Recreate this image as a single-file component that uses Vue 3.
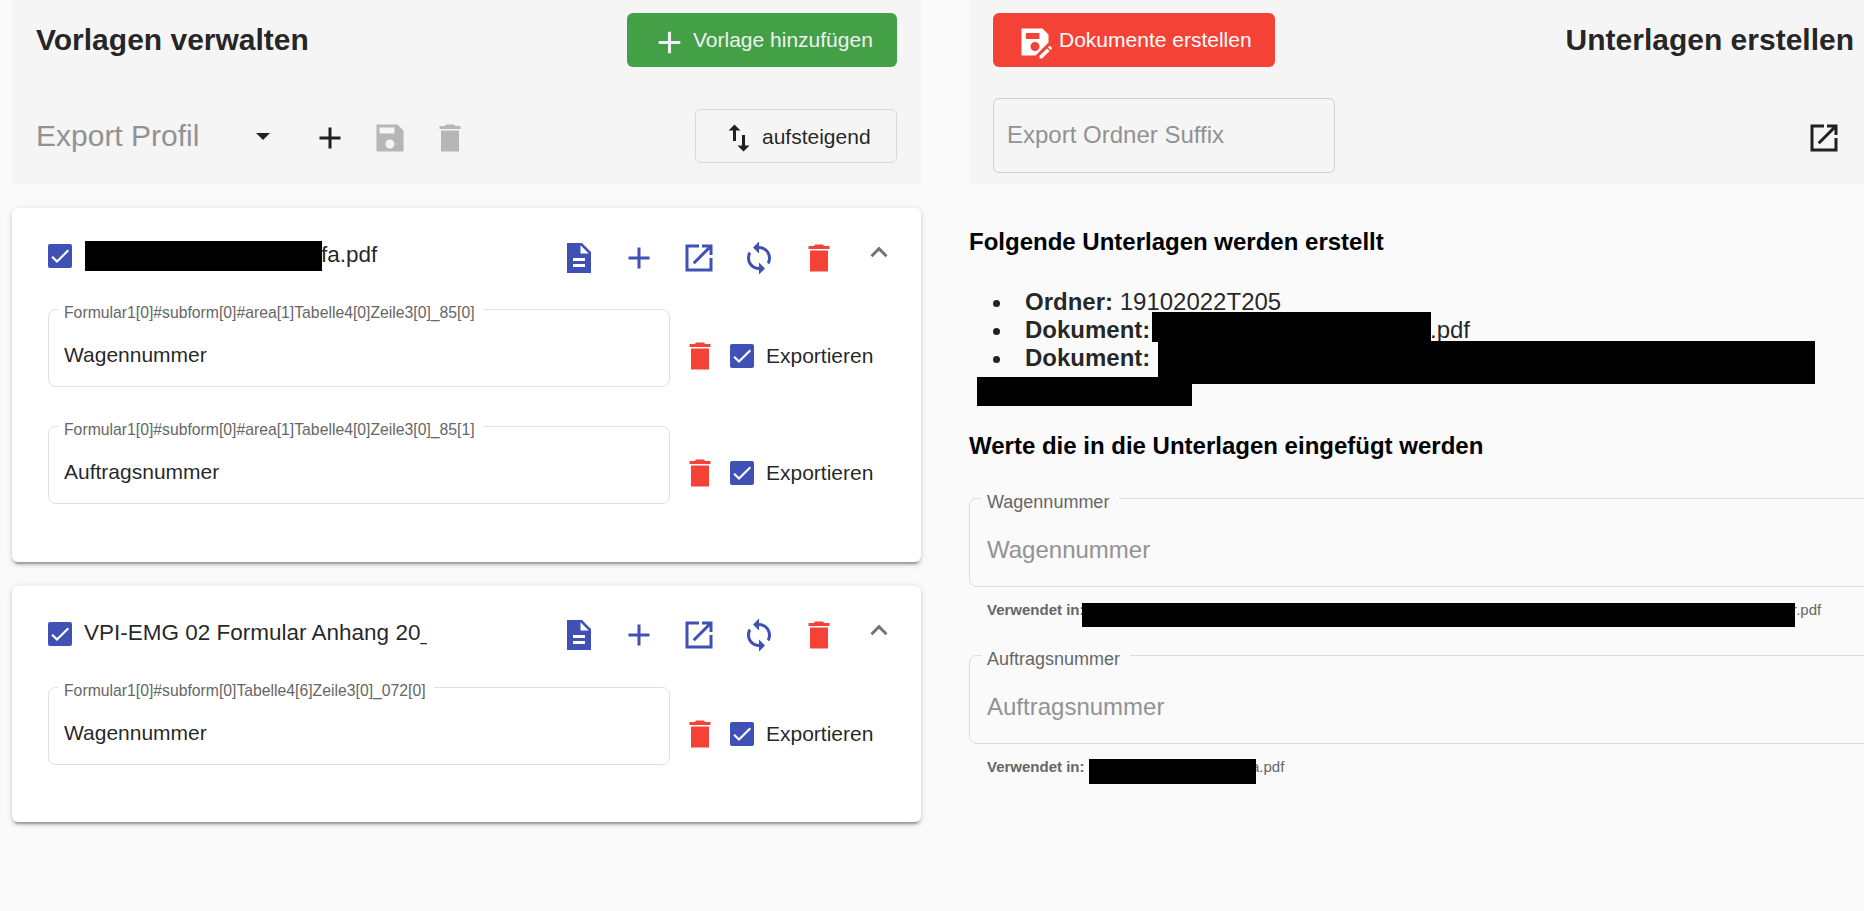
<script setup>
import { h } from 'vue'

const paths = {
  add: 'M19 13h-6v6h-2v-6H5v-2h6V5h2v6h6v2z',
  save: 'M17 3H3v18h18V7l-4-4zm-5 16c-1.66 0-3-1.34-3-3s1.34-3 3-3 3 1.34 3 3-1.34 3-3 3zm3-10H5V5h10v4z',
  saveAs: 'M21 12.4V7l-4-4H3v18h9.4l8.6-8.6zM15 15c0 1.66-1.34 3-3 3s-3-1.34-3-3 1.34-3 3-3 3 1.34 3 3zM6 6h9v4H6V6zm13.99 10.25 1.77 1.77L16.77 23H15v-1.77l4.99-4.98zm3.26.26-.85.85-1.77-1.77.85-.85c.2-.2.51-.2.71 0l1.06 1.06c.2.2.2.52 0 .71z',
  remove: 'M6 21h12V7H6v14zM19 4h-3.5l-1-1h-5l-1 1H5v2h14V4z',
  swap: 'M16 17.01V10h-2v7.01h-3L15 21l4-3.99h-3zM9 3L5 6.99h3V14h2V6.99h3L9 3z',
  open: 'M19 19H5V5h7V3H3v18h18v-9h-2v7zM14 3v2h3.59l-9.83 9.83 1.41 1.41L19 6.41V10h2V3h-7z',
  doc: 'M14 2H4v20h16V8l-6-6zm2 16H8v-2h8v2zm0-4H8v-2h8v2zm-3-5V3.5L18.5 9H13z',
  sync: 'M12 4V1L8 5l4 4V6c3.31 0 6 2.69 6 6 0 1.01-.25 1.97-.7 2.8l1.46 1.46C19.54 15.03 20 13.57 20 12c0-4.42-3.58-8-8-8zm0 14c-3.31 0-6-2.69-6-6 0-1.01.25-1.97.7-2.8L5.24 7.74C4.46 8.97 4 10.43 4 12c0 4.42 3.58 8 8 8v3l4-4-4-4v3z'
}

const Icon = (props) =>
  h('svg', { viewBox: '0 0 24 24', width: 36, height: 36, fill: 'currentColor' }, [h('path', { d: paths[props.name] })])
Icon.props = ['name']

const Check = () =>
  h('svg', { viewBox: '0 0 24 24', width: 24, height: 24 }, [
    h('rect', { width: 24, height: 24, rx: 2, fill: '#3f51b5' }),
    h('path', { d: 'M4.1 12.7 9 17.6 20.3 6.3', fill: 'none', stroke: '#fff', 'stroke-width': 2.13 })
  ])

const cards = [
  {
    redacted: true,
    title: 'fa.pdf',
    fields: [
      { label: 'Formular1[0]#subform[0]#area[1]Tabelle4[0]Zeile3[0]_85[0]', value: 'Wagennummer' },
      { label: 'Formular1[0]#subform[0]#area[1]Tabelle4[0]Zeile3[0]_85[1]', value: 'Auftragsnummer' }
    ]
  },
  {
    redacted: false,
    title: 'VPI-EMG 02 Formular Anhang 20_',
    fields: [{ label: 'Formular1[0]#subform[0]Tabelle4[6]Zeile3[0]_072[0]', value: 'Wagennummer' }]
  }
]
const actions = ['doc', 'add', 'open', 'sync', 'remove']
</script>

<template>
  <main class="page">
    <section class="left">
      <header class="bar">
        <div class="row top">
          <h1>Vorlagen verwalten</h1>
          <button class="btn green"><Icon name="add" /><span>Vorlage hinzufügen</span></button>
        </div>
        <div class="row tools">
          <div class="select">
            <span>Export Profil</span>
            <i class="caret"></i>
          </div>
          <div class="icons">
            <b><Icon name="add" /></b>
            <b class="off"><Icon name="save" /></b>
            <b class="off"><Icon name="remove" /></b>
          </div>
          <button class="btn outline"><Icon name="swap" /><span>aufsteigend</span></button>
        </div>
      </header>

      <article v-for="card in cards" :key="card.title" class="card">
        <div class="card-head">
          <Check class="check" />
          <div class="name"><i v-if="card.redacted" class="mask m-name"></i><span>{{ card.title }}</span></div>
          <div class="actions">
            <b v-for="a in actions" :key="a" :class="a"><Icon :name="a" /></b>
          </div>
          <svg class="chevron" viewBox="0 0 18 12" width="18" height="12"><path d="M1.5 10.2 9 2.7l7.5 7.5" fill="none" stroke="#757575" stroke-width="3" /></svg>
        </div>
        <div v-for="f in card.fields" :key="f.label" class="line">
          <div class="field"><label>{{ f.label }}</label><span>{{ f.value }}</span></div>
          <div class="export">
            <b class="remove"><Icon name="remove" /></b>
            <Check />
            <span>Exportieren</span>
          </div>
        </div>
      </article>
    </section>

    <section class="right">
      <header class="bar">
        <div class="row top">
          <button class="btn red"><Icon name="saveAs" /><span>Dokumente erstellen</span></button>
          <h1>Unterlagen erstellen</h1>
        </div>
        <div class="row tools">
          <div class="suffix">Export Ordner Suffix</div>
          <b class="ext"><Icon name="open" /></b>
        </div>
      </header>

      <h3 class="first">Folgende Unterlagen werden erstellt</h3>
      <ul>
        <li><strong>Ordner:</strong>&nbsp;<span>19102022T205</span></li>
        <li><strong>Dokument:</strong><i class="mask m-doc"></i><span class="after-doc">.pdf</span></li>
        <li><strong>Dokument:</strong><i class="mask m-long"></i><i class="mask m-rest"></i></li>
      </ul>
      <h3 class="second">Werte die in die Unterlagen eingefügt werden</h3>

      <div class="entry">
        <div class="field big"><label>Wagennummer</label><span>Wagennummer</span></div>
        <p class="hint"><strong>Verwendet in:</strong><i class="mask m-used1"></i><span class="tail1">r.pdf</span></p>
      </div>
      <div class="entry">
        <div class="field big"><label>Auftragsnummer</label><span>Auftragsnummer</span></div>
        <p class="hint"><strong>Verwendet in:</strong><i class="mask m-used2"></i><span class="tail2">a.pdf</span></p>
      </div>
    </section>
  </main>
</template>

<style>
body { margin: 0; background: #fafafa; }
</style>

<style scoped>
* { box-sizing: border-box; }
.page {
  display: flex;
  gap: 48px;
  width: 1864px;
  height: 911px;
  padding-left: 12px;
  overflow: hidden;
  background: #fafafa;
  color: rgba(0, 0, 0, 0.87);
  font-family: "Liberation Sans", Arial, sans-serif;
}
.left { width: 909px; flex: none; }
.right { width: 895px; flex: none; }
svg { display: block; flex: none; }
b { display: flex; align-items: center; justify-content: center; width: 60px; height: 60px; }
.bar { height: 184px; padding: 0 24px; background: #f5f5f5; }
.row { display: flex; align-items: center; justify-content: space-between; }
.top { height: 80px; }
.tools { height: 104px; padding-top: 8px; }
h1 { margin: 0; font-size: 30px; line-height: 36px; font-weight: 700; white-space: nowrap; }
.right h1 { margin-right: -14px; }
.btn {
  display: flex;
  align-items: center;
  height: 54px;
  padding: 0;
  border: 0;
  border-radius: 6px;
  font: 21px/54px "Liberation Sans", Arial, sans-serif;
  white-space: nowrap;
}
.btn svg { margin-top: 4px; }
.green { width: 270px; padding-left: 24px; background: #43a047; color: #f0f0f0; }
.green svg { width: 37px; height: 37px; }
.green span { margin-left: 5px; }
.red { width: 282px; padding-left: 24px; background: #f44336; color: #fff; }
.red svg { margin-top: 3px; }
.red span { margin-left: 6px; }
.outline { width: 202px; padding-left: 25px; background: transparent; border: 1px solid #d8d8d8; line-height: 40px; color: rgba(0, 0, 0, 0.87); }
.outline span { margin: 2px 0 0 5px; }
.select { display: flex; align-items: center; justify-content: space-between; width: 234px; font-size: 30px; line-height: 34px; color: #929292; }
.caret { border: 7.5px solid transparent; border-top-color: #212121; border-bottom: 0; }
.icons { display: flex; margin: 4px auto 0 30px; }
.off { color: #b6b6b6; }
.suffix { width: 342px; height: 75px; margin-top: -2px; padding-left: 13px; border: 1px solid #d0d0d0; border-radius: 6px; font-size: 24px; line-height: 72px; color: #929292; }
.ext { margin: 4px -14px 0 0; }

.card {
  margin-top: 24px;
  padding: 20px 36px 42px;
  border-radius: 6px;
  background: #fff;
  box-shadow: 0 4.5px 1.5px -3px rgba(0, 0, 0, 0.2), 0 3px 3px 0 rgba(0, 0, 0, 0.14), 0 1.5px 7.5px 0 rgba(0, 0, 0, 0.12);
}
.card + .card { padding-bottom: 41px; }
.card-head { display: flex; align-items: center; height: 60px; }
.check { margin-bottom: 4px; }
.name { display: flex; flex: none; align-items: center; width: 343px; height: 32px; margin: -6px 0 0 12px; overflow: hidden; font-size: 22.5px; line-height: 32px; white-space: nowrap; }
.actions { display: flex; flex: none; margin: 0 0 0 122px; color: #3f51b5; }
.card + .card .actions { margin-top: -2px; }
.remove { color: #f44336; }
.chevron { margin: -12px 0 0 21px; }
.line { display: flex; margin-top: 23px; }
.card-head + .line { margin-top: 21px; }
.field { position: relative; width: 622px; height: 78px; padding-left: 15px; border: 1px solid #e0e0e0; border-radius: 7.5px; font-size: 21px; line-height: 89px; }
.field label { position: absolute; top: -9px; left: 9px; padding: 0 8px 0 6px; background: #fff; font-size: 15.75px; line-height: 24px; white-space: nowrap; color: #666; }
.export { display: flex; align-items: center; height: 94px; font-size: 21px; line-height: 26px; }
.export b { width: 60px; }
.export span { margin: -1px 0 0 12px; }

.mask { display: block; flex: none; z-index: 1; background: #000; }
.m-name { width: 237px; height: 30px; margin: 1px 0 0 1px; }
.m-name + span { margin-left: -1px; }
h3 { margin: 0; font-size: 24px; line-height: 28px; color: #000; }
.first { margin-top: 44px; }
ul { margin: 32px 0 0; padding: 0 0 0 56px; list-style: none; font-size: 24px; line-height: 28px; }
li { position: relative; display: flex; height: 28px; white-space: nowrap; }
li::before { content: ""; position: absolute; left: -32px; top: 12px; width: 7px; height: 7px; border-radius: 50%; background: #212121; }
.m-doc { position: absolute; left: 127px; top: -4px; width: 279px; height: 30px; }
.after-doc { position: absolute; left: 405px; }
.m-long { position: absolute; left: 133px; top: -3px; width: 657px; height: 43px; }
.m-rest { position: absolute; left: -48px; top: 33px; width: 215px; height: 29px; }
.second { margin-top: 60px; }
.entry { height: 157px; }
.second + .entry { margin-top: 38px; }
.big { width: 960px; height: 89px; padding-left: 17px; border-color: #dcdcdc; font-size: 24px; line-height: 102px; color: #929292; }
.big label { left: 11px; padding-right: 10px; background: #fafafa; font-size: 18px; }
.hint { display: flex; align-items: center; height: 25px; margin: 15px 0 0 18px; font-size: 15px; line-height: 17px; color: #666; white-space: nowrap; }
.hint strong { width: 95px; margin-top: -11px; }
.hint span { margin-top: -11px; }
.hint .mask { position: relative; }
.m-used1 { width: 713px; height: 24px; }
.tail1 { margin-left: -3px; }
.m-used2 { width: 167px; height: 25px; margin: -1px 0 0 7px; }
.tail2 { margin-left: -5px; }
</style>
